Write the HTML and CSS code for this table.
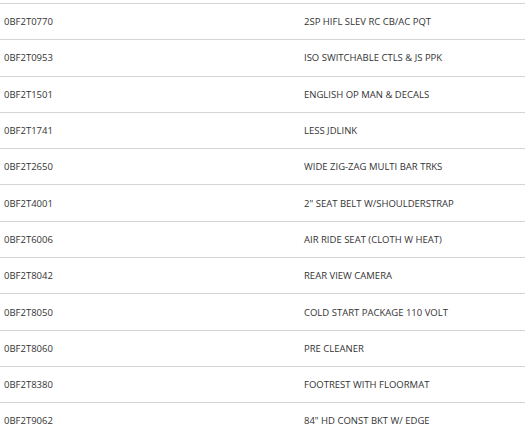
FILE: index.html
```html
<!DOCTYPE html>
<html>
<head>
<meta charset="utf-8">
<link rel="stylesheet" href="styles.css">
</head>
<body>
<table class="options">
<tbody>
<tr><td class="code">0BF2T0770</td><td class="desc">2SP HIFL SLEV RC CB/AC PQT</td></tr>
<tr><td class="code">0BF2T0953</td><td class="desc">ISO SWITCHABLE CTLS &amp; JS PPK</td></tr>
<tr><td class="code">0BF2T1501</td><td class="desc">ENGLISH OP MAN &amp; DECALS</td></tr>
<tr><td class="code">0BF2T1741</td><td class="desc">LESS JDLINK</td></tr>
<tr><td class="code">0BF2T2650</td><td class="desc">WIDE ZIG-ZAG MULTI BAR TRKS</td></tr>
<tr><td class="code">0BF2T4001</td><td class="desc">2" SEAT BELT W/SHOULDERSTRAP</td></tr>
<tr><td class="code">0BF2T6006</td><td class="desc">AIR RIDE SEAT (CLOTH W HEAT)</td></tr>
<tr><td class="code">0BF2T8042</td><td class="desc">REAR VIEW CAMERA</td></tr>
<tr><td class="code">0BF2T8050</td><td class="desc">COLD START PACKAGE 110 VOLT</td></tr>
<tr><td class="code">0BF2T8060</td><td class="desc">PRE CLEANER</td></tr>
<tr><td class="code">0BF2T8380</td><td class="desc">FOOTREST WITH FLOORMAT</td></tr>
<tr><td class="code">0BF2T9062</td><td class="desc">84" HD CONST BKT W/ EDGE</td></tr>
</tbody>
</table>
</body>
</html>
```
FILE: styles.css
```css
html, body {
  margin: 0;
  padding: 0;
  background: #fff;
}
body {
  padding-top: 3px;
  font-family: "Open Sans", "Liberation Sans", sans-serif;
  font-size: 9.5px;
  color: #333;
}
.options {
  width: 100%;
  border-collapse: collapse;
  border-spacing: 0;
}
.options td {
  height: 35.3px;
  padding: 0 4px;
  border-top: 1px solid #d4d4d4;
  vertical-align: middle;
  white-space: nowrap;
}
.options .code {
  width: 292px;
}
```
